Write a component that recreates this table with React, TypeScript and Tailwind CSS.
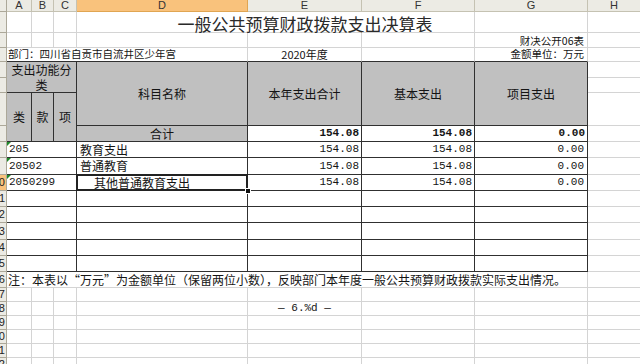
import type { ReactNode } from "react";

const W = {
  A: "w-[25px]",
  B: "w-[22px]",
  C: "w-[23px]",
  D: "w-[171px]",
  E: "w-[114px]",
  F: "w-[113px]",
  G: "w-[113px]",
  ABC: "w-[70px]",
  ABCD: "w-[241px]",
  AG: "w-[581px]",
};

const GRID = "border-[#d4d4d4]";
const RULE = "border-[#303030]";
const GRAY = "bg-[#c0c0c0]";
const CJK = "font-['Noto_Sans_CJK_SC',sans-serif]";
const MONO = "font-['Liberation_Mono','Noto_Sans_CJK_SC',monospace]";

function Cell({ className = "", children }: { className?: string; children?: ReactNode }) {
  return <div className={`shrink-0 border-r border-b flex items-center ${className}`}>{children}</div>;
}

function RowHead({ n, className = "" }: { n: number; className?: string }) {
  const active = n === 10;
  return (
    <div
      className={`shrink-0 w-[7px] flex items-center justify-end overflow-hidden border-r border-b border-[#aca899] text-[11px] leading-none text-[#222] font-['Liberation_Sans',sans-serif] ${
        active ? "bg-[#f9c27c]" : "bg-[#ecebe4]"
      } ${className}`}
    >
      {n >= 10 && <span className="pr-[1px]">{n}</span>}
    </div>
  );
}

function Row({ n, h, children }: { n: number; h: string; children?: ReactNode }) {
  return (
    <div className={`flex ${h}`}>
      <RowHead n={n} />
      {children}
      <div className={`flex-1 border-b ${GRID}`} />
    </div>
  );
}

function GreenMark() {
  return (
    <span className="absolute left-0 top-0 w-0 h-0 border-t-[4px] border-t-[#1f8a2a] border-r-[4px] border-r-transparent" />
  );
}

const columns = [
  { key: "A", w: W.A },
  { key: "B", w: W.B },
  { key: "C", w: W.C },
  { key: "D", w: W.D },
  { key: "E", w: W.E },
  { key: "F", w: W.F },
  { key: "G", w: W.G },
];

const rows = [
  { n: 8, h: "h-[16px]", code: "205", name: "教育支出", indent: false, vals: ["154.08", "154.08", "0.00"] },
  { n: 9, h: "h-[17px]", code: "20502", name: "普通教育", indent: false, vals: ["154.08", "154.08", "0.00"] },
  { n: 10, h: "h-[16px]", code: "2050299", name: "其他普通教育支出", indent: true, vals: ["154.08", "154.08", "0.00"] },
];

const emptyRows = [
  { n: 11, h: "h-[16px]" },
  { n: 12, h: "h-[16px]" },
  { n: 13, h: "h-[17px]" },
  { n: 14, h: "h-[16px]" },
  { n: 15, h: "h-[16px]" },
];

const tailRows = [
  { n: 17, h: "h-[14px]" },
  { n: 18, h: "h-[14px]" },
  { n: 19, h: "h-[14px]" },
  { n: 20, h: "h-[14px]" },
  { n: 21, h: "h-[14px]" },
  { n: 22, h: "h-[14px]" },
];

export default function App() {
  return (
    <div className={`w-[640px] h-[364px] overflow-hidden bg-white text-[#141414] leading-none ${CJK}`}>
      {/* Column letters */}
      <div className="flex h-[12px] text-[11px] font-['Liberation_Sans',sans-serif] text-[#333]">
        <div className="shrink-0 w-[7px] bg-[#ecebe4] border-r border-b border-[#aca899]" />
        {columns.map((c) => (
          <div
            key={c.key}
            className={`shrink-0 ${c.w} flex items-center justify-center border-r border-b ${
              c.key === "D" ? "bg-[#f9c27c] border-[#e0a552]" : "bg-[#ecebe4] border-[#c5c2b2]"
            }`}
          >
            {c.key}
          </div>
        ))}
        <div className="flex-1 flex items-center justify-center bg-[#ecebe4] border-b border-[#c5c2b2]">H</div>
      </div>

      {/* Row 1: title */}
      <Row n={1} h="h-[21px]">
        <Cell className={`${W.A} ${GRID}`} />
        <Cell className={`${W.B} ${GRID}`} />
        <Cell className={`${W.C} ${GRID}`} />
        <div className={`shrink-0 ${W.D} border-b ${GRID}`} />
        <div className={`shrink-0 ${W.E} border-b ${GRID} flex items-end justify-center`}>
          <span className="whitespace-nowrap text-[17px] leading-[17px] text-[#2a2a2a]">一般公共预算财政拨款支出决算表</span>
        </div>
        <Cell className={`${W.F} ${GRID}`} />
        <Cell className={`${W.G} ${GRID}`} />
      </Row>

      {/* Row 2 */}
      <Row n={2} h="h-[15px]">
        <Cell className={`${W.A} ${GRID}`} />
        <Cell className={`${W.B} ${GRID}`} />
        <Cell className={`${W.C} ${GRID}`} />
        <Cell className={`${W.D} ${GRID}`} />
        <Cell className={`${W.E} ${GRID}`} />
        <Cell className={`${W.F} ${GRID}`} />
        <Cell className={`${W.G} ${GRID} justify-end items-end pr-[3px] pb-[1px] text-[10.5px]`}>财决公开06表</Cell>
      </Row>

      {/* Row 3 */}
      <Row n={3} h="h-[14px]">
        <Cell className={`${W.ABCD} ${GRID} border-b-[#303030] pl-[1px] text-[10.5px] whitespace-nowrap`}>
          部门：四川省自贡市自流井区少年宫
        </Cell>
        <Cell className={`${W.E} ${GRID} border-b-[#303030] justify-center text-[11px]`}>2020年度</Cell>
        <Cell className={`${W.F} ${GRID} border-b-[#303030]`} />
        <Cell className={`${W.G} ${GRID} border-b-[#303030] justify-end pr-[3px] text-[10.5px]`}>金额单位：万元</Cell>
      </Row>

      {/* Rows 4-7: table head */}
      <div className="flex h-[80px]">
        <div className="shrink-0 w-[7px] flex flex-col">
          <RowHead n={4} className="h-[16px]" />
          <RowHead n={5} className="h-[15px]" />
          <RowHead n={6} className="h-[33px]" />
          <RowHead n={7} className="h-[16px]" />
        </div>
        <div className={`shrink-0 ${W.ABC} flex flex-col`}>
          <div
            className={`h-[31px] ${GRAY} border-r border-b ${RULE} flex items-center justify-center text-center text-[12px] leading-[15px]`}
          >
            支出功能分类
          </div>
          <div className="flex flex-1 text-[12px]">
            <Cell className={`${W.A} ${GRAY} ${RULE} justify-center`}>类</Cell>
            <Cell className={`${W.B} ${GRAY} ${RULE} justify-center`}>款</Cell>
            <Cell className={`${W.C} ${GRAY} ${RULE} justify-center`}>项</Cell>
          </div>
        </div>
        <div className={`shrink-0 ${W.D} flex flex-col text-[12px]`}>
          <div className={`h-[64px] ${GRAY} border-r border-b ${RULE} flex items-center justify-center`}>科目名称</div>
          <div className={`flex-1 ${GRAY} border-r border-b ${RULE} flex items-center justify-center`}>合计</div>
        </div>
        {[
          { w: W.E, label: "本年支出合计", total: "154.08" },
          { w: W.F, label: "基本支出", total: "154.08" },
          { w: W.G, label: "项目支出", total: "0.00" },
        ].map((h) => (
          <div key={h.label} className={`shrink-0 ${h.w} flex flex-col`}>
            <div className={`h-[64px] ${GRAY} border-r border-b ${RULE} flex items-center justify-center text-[12px]`}>
              {h.label}
            </div>
            <div
              className={`flex-1 border-r border-b ${RULE} flex items-center justify-end pr-[2px] ${MONO} font-bold text-[11px]`}
            >
              {h.total}
            </div>
          </div>
        ))}
        <div className="flex-1 flex flex-col">
          <div className={`h-[16px] border-b ${GRID}`} />
          <div className={`h-[15px] border-b ${GRID}`} />
          <div className={`h-[33px] border-b ${GRID}`} />
          <div className={`h-[16px] border-b ${GRID}`} />
        </div>
      </div>

      {/* Rows 8-10: data */}
      {rows.map((r) => (
        <Row key={r.n} n={r.n} h={r.h}>
          <Cell className={`${W.ABC} ${RULE} relative pl-[2px] ${MONO} text-[11px]`}>
            <GreenMark />
            {r.code}
          </Cell>
          <Cell className={`${W.D} ${RULE} relative text-[12px] ${r.indent ? "pl-[17px]" : "pl-[3px]"}`}>
            {r.name}
            {r.n === 10 && (
              <>
                <span className="absolute -left-px -top-px -right-px -bottom-px border-2 border-[#222] pointer-events-none" />
                <span className="absolute -right-[4px] -bottom-[4px] w-[6px] h-[6px] bg-[#111] border border-white" />
              </>
            )}
          </Cell>
          <Cell className={`${W.E} ${RULE} justify-end pr-[2px] ${MONO} text-[11px]`}>{r.vals[0]}</Cell>
          <Cell className={`${W.F} ${RULE} justify-end pr-[2px] ${MONO} text-[11px]`}>{r.vals[1]}</Cell>
          <Cell className={`${W.G} ${RULE} justify-end pr-[3px] ${MONO} text-[11px]`}>{r.vals[2]}</Cell>
        </Row>
      ))}

      {/* Rows 11-15: empty table rows */}
      {emptyRows.map((r) => (
        <Row key={r.n} n={r.n} h={r.h}>
          <Cell className={`${W.ABC} ${RULE}`} />
          <Cell className={`${W.D} ${RULE}`} />
          <Cell className={`${W.E} ${RULE}`} />
          <Cell className={`${W.F} ${RULE}`} />
          <Cell className={`${W.G} ${RULE}`} />
        </Row>
      ))}

      {/* Row 16: note */}
      <Row n={16} h="h-[16px]">
        <Cell className={`${W.AG} ${GRID} pl-[1px] text-[12px] whitespace-nowrap`}>
          注：本表以“万元”为金额单位（保留两位小数），反映部门本年度一般公共预算财政拨款实际支出情况。
        </Cell>
      </Row>

      {/* Rows 17-22 */}
      {tailRows.map((r) => (
        <Row key={r.n} n={r.n} h={r.h}>
          <Cell className={`${W.A} ${GRID}`} />
          <Cell className={`${W.B} ${GRID}`} />
          <Cell className={`${W.C} ${GRID}`} />
          <Cell className={`${W.D} ${GRID}`} />
          <Cell className={`${W.E} ${GRID} justify-center ${MONO} text-[11px]`}>
            {r.n === 18 ? "— 6.%d —" : null}
          </Cell>
          <Cell className={`${W.F} ${GRID}`} />
          <Cell className={`${W.G} ${GRID}`} />
        </Row>
      ))}
    </div>
  );
}
